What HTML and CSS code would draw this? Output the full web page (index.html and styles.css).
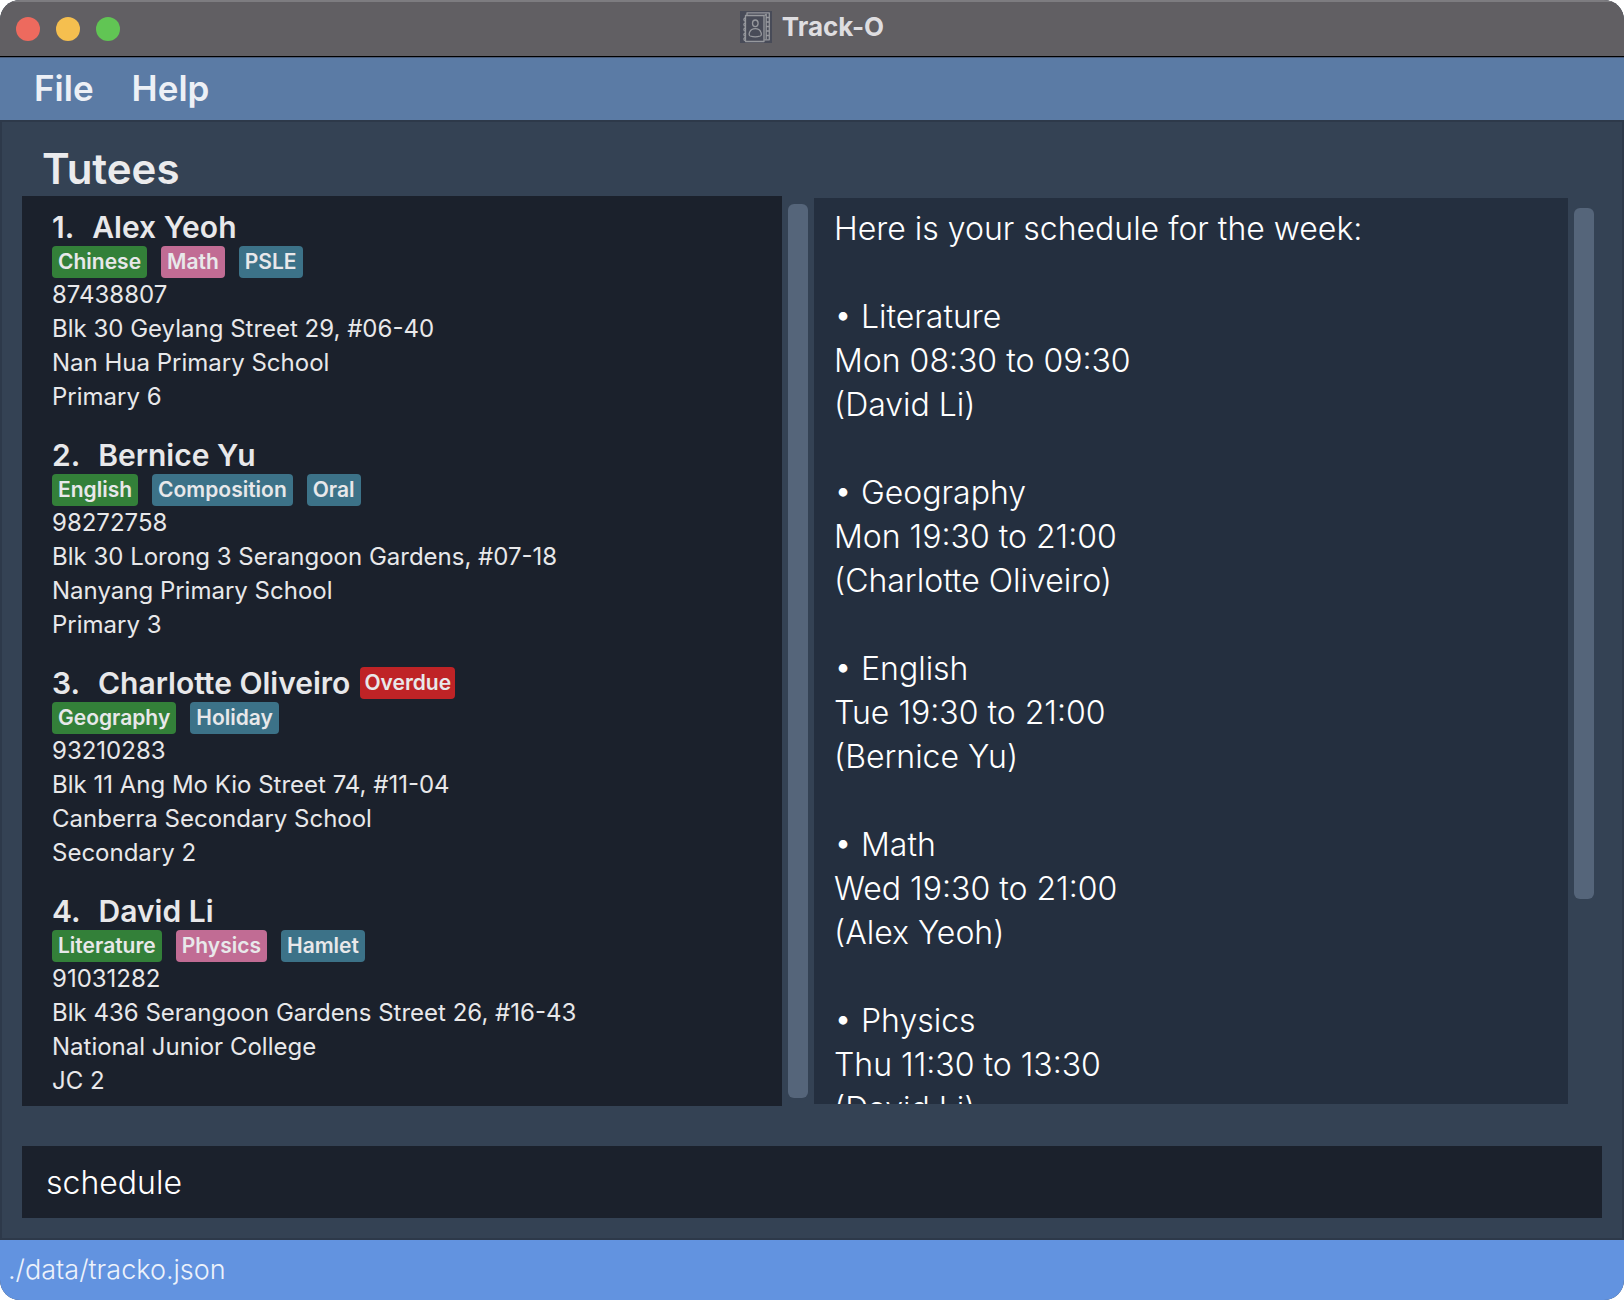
FILE: index.html
```html
<!DOCTYPE html>
<html lang="en">
<head>
<meta charset="utf-8">
<title>Track-O</title>
<link rel="stylesheet" href="styles.css">
</head>
<body>
<div class="window">
  <header class="titlebar">
    <div class="lights">
      <button class="light light-close" type="button" aria-label="Close"></button>
      <button class="light light-minimise" type="button" aria-label="Minimise"></button>
      <button class="light light-zoom" type="button" aria-label="Zoom"></button>
    </div>
    <div class="title">
      <svg class="app-icon" viewBox="0 0 32 32" aria-hidden="true">
        <rect width="32" height="32" fill="#484b58"/>
        <g fill="none" stroke="#96989d" stroke-width="1.3" stroke-linejoin="round">
          <path d="M5.500 4.500h18.500v26h-18.500z"/>
          <path d="M7 4.500V1.800h22.300v27h-5"/>
          <path d="M24.500 4.500l1.700-1.300v25.300M26.500 6.500h3M26.500 11h3M26.500 15.500h3M26.500 20h3M26.500 24.500h3"/>
          <path d="M5.500 7a1.600 1.600 0 1 0 0 3.200M5.500 12a1.600 1.600 0 1 0 0 3.200M5.500 17a1.600 1.600 0 1 0 0 3.200M5.500 22a1.600 1.600 0 1 0 0 3.200M5.500 26.500a1.600 1.600 0 1 0 0 3.200"/>
          <ellipse cx="15.300" cy="12.300" rx="2.800" ry="3.300"/>
          <path d="M10.200 25c-1.300-.5-1.300-2.300-.5-4 1-2.200 3-3.300 5.600-3.300s4.600 1.100 5.500 3.300c.8 1.700.8 3.500-.5 4-2.500.8-7.600.8-10.100 0z"/>
        </g>
      </svg>
      <span>Track-O</span>
    </div>
  </header>

  <nav class="menubar">
    <button class="menu" type="button">File</button>
    <button class="menu" type="button">Help</button>
  </nav>

  <main class="content">
    <h1 class="heading">Tutees</h1>
    <div class="panes">
      <section class="pane">
        <ol class="tutees">
          <li class="card">
            <h2 class="name"><span class="index">1.</span><span>Alex Yeoh</span></h2>
            <div class="tags"><span class="tag tag-green">Chinese</span><span class="tag tag-pink">Math</span><span class="tag tag-teal">PSLE</span></div>
            <p>87438807</p>
            <p>Blk 30 Geylang Street 29, #06-40</p>
            <p>Nan Hua Primary School</p>
            <p>Primary 6</p>
          </li>
          <li class="card">
            <h2 class="name"><span class="index">2.</span><span>Bernice Yu</span></h2>
            <div class="tags"><span class="tag tag-green">English</span><span class="tag tag-teal">Composition</span><span class="tag tag-teal">Oral</span></div>
            <p>98272758</p>
            <p>Blk 30 Lorong 3 Serangoon Gardens, #07-18</p>
            <p>Nanyang Primary School</p>
            <p>Primary 3</p>
          </li>
          <li class="card">
            <h2 class="name"><span class="index">3.</span><span>Charlotte Oliveiro</span><span class="tag tag-overdue">Overdue</span></h2>
            <div class="tags"><span class="tag tag-green">Geography</span><span class="tag tag-teal">Holiday</span></div>
            <p>93210283</p>
            <p>Blk 11 Ang Mo Kio Street 74, #11-04</p>
            <p>Canberra Secondary School</p>
            <p>Secondary 2</p>
          </li>
          <li class="card">
            <h2 class="name"><span class="index">4.</span><span>David Li</span></h2>
            <div class="tags"><span class="tag tag-green">Literature</span><span class="tag tag-pink">Physics</span><span class="tag tag-teal">Hamlet</span></div>
            <p>91031282</p>
            <p>Blk 436 Serangoon Gardens Street 26, #16-43</p>
            <p>National Junior College</p>
            <p>JC 2</p>
          </li>
        </ol>
        <div class="scrollbar"><div class="thumb"></div></div>
      </section>
      <section class="pane pane-result">
        <textarea class="result" readonly aria-label="Result">Here is your schedule for the week:

• Literature
Mon 08:30 to 09:30
(David Li)

• Geography
Mon 19:30 to 21:00
(Charlotte Oliveiro)

• English
Tue 19:30 to 21:00
(Bernice Yu)

• Math
Wed 19:30 to 21:00
(Alex Yeoh)

• Physics
Thu 11:30 to 13:30
(David Li)</textarea>
        <div class="scrollbar"><div class="thumb thumb-result"></div></div>
      </section>
    </div>
    <input class="command" type="text" value="schedule" aria-label="Command">
  </main>

  <footer class="status">./data/tracko.json</footer>
</div>
</body>
</html>
```
FILE: styles.css
```css
* {
  box-sizing: border-box;
  margin: 0;
  padding: 0;
}

body {
  background: #fff;
  font-family: Inter, "Liberation Sans", sans-serif;
}

button,
input,
textarea {
  border: 0;
  border-radius: 0;
  outline: 0;
  background: none;
  font-family: inherit;
}

.window {
  display: flex;
  flex-direction: column;
  height: 100vh;
  border-radius: 20px;
  overflow: hidden;
  background: #344254;
}

/* Title bar */
.titlebar {
  display: grid;
  grid-template-columns: 1fr auto 1fr;
  align-items: center;
  height: 57px;
  padding: 0 16px;
  border-top: 2px solid #7d7c80;
  border-bottom: 1px solid #000;
  background: #615f63;
}

.lights {
  display: flex;
  gap: 16px;
}

.light {
  width: 24px;
  height: 24px;
  border-radius: 50%;
}

.light-close { background: #ed6a5e; }
.light-minimise { background: #f5bf4f; }
.light-zoom { background: #61c554; }

.title {
  display: flex;
  align-items: center;
  gap: 10px;
  padding-bottom: 4px;
  color: #dedde0;
  font-size: 26px;
  font-weight: 700;
  line-height: 32px;
}

.app-icon {
  width: 32px;
  height: 32px;
}

/* Menu bar */
.menubar {
  display: flex;
  gap: 38px;
  height: 63px;
  padding: 0 34px 2px;
  border-top: 1px solid #4a5b78;
  background: #5b7ba5;
}

.menu {
  color: #edf0f6;
  font-size: 35px;
  font-weight: 600;
}

/* Main area */
.content {
  display: flex;
  flex-direction: column;
  flex: 1;
  min-height: 0;
  padding: 22px 20px 20px;
  border: 2px solid #2d394a;
}

.heading {
  padding: 0 20px 2px;
  color: #ebebed;
  font-size: 42px;
  font-weight: 600;
  line-height: 50px;
}

.panes {
  display: grid;
  grid-template-columns: 792fr 788fr;
  flex: 1;
  min-height: 0;
}

.pane {
  display: flex;
  gap: 6px;
  min-width: 0;
  min-height: 0;
  padding-right: 6px;
}

.pane-result {
  padding: 2px 8px 2px 0;
}

.scrollbar {
  width: 20px;
  padding: 8px 0;
}

.pane-result .scrollbar {
  padding: 10px 0;
}

.thumb {
  height: 100%;
  border-radius: 6px;
  background: #55657a;
}

.thumb-result {
  height: 78%;
}

/* Tutee list */
.tutees {
  display: flex;
  flex-direction: column;
  flex: 1;
  gap: 22px;
  padding: 12px 30px 8px;
  overflow: hidden;
  list-style: none;
  background: #1b212c;
  color: #e8e8ea;
  font-size: 24px;
  line-height: 34px;
}

.name {
  display: flex;
  align-items: center;
  gap: 10px;
  height: 38px;
  font-size: 30px;
  font-weight: 600;
}

.index {
  padding-right: 8px;
}

.tags {
  display: flex;
  gap: 14px;
}

.tag {
  padding: 0 6px;
  border-radius: 4px;
  font-size: 21px;
  font-weight: 600;
  line-height: 32px;
}

.tag-green { background: #338039; }
.tag-pink { background: #c16c94; }
.tag-teal { background: #3c7288; }

.tag-overdue {
  padding: 0 4px;
  background: #bf2326;
}

/* Result text */
.result {
  flex: 1;
  min-width: 0;
  padding: 9px 20px 0;
  overflow: hidden;
  resize: none;
  background: #242f3f;
  color: #fff;
  font-size: 32px;
  font-weight: 300;
  line-height: 44px;
}

.command {
  height: 72px;
  margin-top: 40px;
  padding: 0 24px;
  background: #1b212c;
  color: #fff;
  font-size: 32px;
  font-weight: 300;
}

.status {
  height: 60px;
  padding: 0 8px;
  background: #6293e0;
  color: #edf2fb;
  font-size: 27px;
  font-weight: 300;
  line-height: 60px;
}
```
